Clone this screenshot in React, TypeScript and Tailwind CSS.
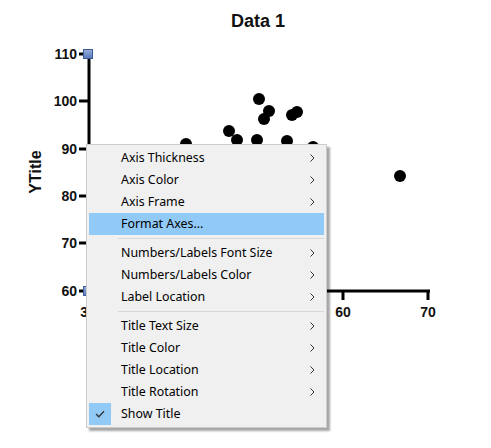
import React from "react";

const Y_TICKS = [
  { v: "110", y: 54 },
  { v: "100", y: 101 },
  { v: "90", y: 149 },
  { v: "80", y: 196 },
  { v: "70", y: 243 },
  { v: "60", y: 291 },
];

const X_TICKS = [
  { v: "30", x: 88 },
  { v: "60", x: 343 },
  { v: "70", x: 428 },
];

// scatter points, in page pixels
const DOTS = [
  [259, 99],
  [269, 111],
  [264, 119],
  [292, 115],
  [297, 112],
  [229, 131],
  [237, 140],
  [257, 140],
  [287, 141],
  [186, 144],
  [313, 147],
  [400, 176],
];

type Item = { label: string; sub?: boolean; active?: boolean; checked?: boolean } | "sep";

const MENU: Item[] = [
  { label: "Axis Thickness", sub: true },
  { label: "Axis Color", sub: true },
  { label: "Axis Frame", sub: true },
  { label: "Format Axes...", active: true },
  "sep",
  { label: "Numbers/Labels Font Size", sub: true },
  { label: "Numbers/Labels Color", sub: true },
  { label: "Label Location", sub: true },
  "sep",
  { label: "Title Text Size", sub: true },
  { label: "Title Color", sub: true },
  { label: "Title Location", sub: true },
  { label: "Title Rotation", sub: true },
  { label: "Show Title", checked: true },
];

function Handle({ x, y }: { x: number; y: number }) {
  return (
    <rect x={x - 4.5} y={y - 4.5} width={9} height={9} fill="url(#hg)" stroke="#3d5b98" strokeWidth={1} />
  );
}

function Chart() {
  return (
    <svg width={491} height={448} className="block">
      <defs>
        <linearGradient id="hg" x1="0" y1="0" x2="0" y2="1">
          <stop offset="0" stopColor="#9ab0dc" />
          <stop offset="1" stopColor="#5677b8" />
        </linearGradient>
      </defs>
      <g fontFamily="'Liberation Sans', Arial, sans-serif" fontWeight="bold" fill="#111">
        <text x={258} y={27} fontSize={18} textAnchor="middle">Data 1</text>
        <text x={0} y={0} fontSize={16} textAnchor="middle" transform="translate(41 172) rotate(-90)">YTitle</text>
        {Y_TICKS.map((t) => (
          <text key={t.v} x={77} y={t.y + 5} fontSize={14} textAnchor="end">{t.v}</text>
        ))}
        {X_TICKS.map((t) => (
          <text key={t.v} x={t.x} y={317} fontSize={14} textAnchor="middle">{t.v}</text>
        ))}
      </g>
      <g stroke="#000" strokeWidth={3}>
        <line x1={89} y1={53} x2={89} y2={292} />
        <line x1={88} y1={291} x2={430} y2={291} />
        {Y_TICKS.map((t) => (
          <line key={t.v} x1={79} y1={t.y} x2={89} y2={t.y} />
        ))}
        {X_TICKS.map((t) => (
          <line key={t.v} x1={t.x} y1={291} x2={t.x} y2={300} />
        ))}
      </g>
      {DOTS.map(([x, y], i) => (
        <circle key={i} cx={x} cy={y} r={6} fill="#000" />
      ))}
      <Handle x={88} y={54} />
      <Handle x={88} y={291} />
    </svg>
  );
}

function Chevron() {
  return (
    <svg width={5} height={8} viewBox="0 0 5 8" className="block">
      <polyline points="0.5,0.5 4,4 0.5,7.5" fill="none" stroke="#333" strokeWidth={1} />
    </svg>
  );
}

function ContextMenu() {
  return (
    <div className="absolute left-[86px] top-[144px] w-[241px] border border-[#cccccc] bg-[#f0f0f0] p-[2px] shadow-[3px_3px_2px_rgba(0,0,0,0.35)] font-['Noto_Sans',sans-serif] text-[12.4px] text-black">
      {MENU.map((item, i) =>
        item === "sep" ? (
          <div key={i} className="flex h-[7px] items-center pl-[29px]">
            <div className="h-px w-full bg-[#d7d7d7]" />
          </div>
        ) : (
          <div key={i} className={`flex h-[22px] items-center ${item.active ? "bg-[#91c9f7]" : ""}`}>
            <div className={`flex h-[22px] w-[22px] items-center justify-center ${item.checked ? "bg-[#91c9f7]" : ""}`}>
              {item.checked && (
                <svg width={10} height={8} viewBox="0 0 10 8">
                  <polyline points="1,4 3.8,6.8 9,1.2" fill="none" stroke="#333" strokeWidth={1.3} />
                </svg>
              )}
            </div>
            <span className="ml-[10px] flex-1 leading-none">{item.label}</span>
            {item.sub && (
              <div className="mr-[9px]">
                <Chevron />
              </div>
            )}
          </div>
        )
      )}
    </div>
  );
}

export default function App() {
  return (
    <div className="relative h-[448px] w-[491px] overflow-hidden bg-white">
      <Chart />
      <ContextMenu />
    </div>
  );
}
